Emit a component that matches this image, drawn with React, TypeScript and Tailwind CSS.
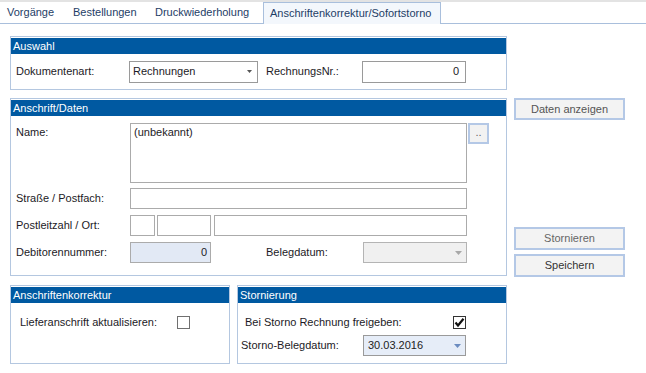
import React from "react";

function GroupBox({ title, className, children }: { title: string; className?: string; children: React.ReactNode }) {
  return (
    <div className={"border border-[#b4c7e0] flex flex-col " + (className ?? "")}>
      <div className="mt-px h-[16px] bg-[#0059a1] text-white pl-[2px] leading-[16px]">{title}</div>
      {children}
    </div>
  );
}

function Arrow({ color, w = 7, h = 4 }: { color: string; w?: number; h?: number }) {
  return (
    <svg width={w} height={h} viewBox={`0 0 ${w} ${h}`} className="shrink-0">
      <path d={`M0 0 L${w} 0 L${w / 2} ${h} Z`} fill={color} />
    </svg>
  );
}

function Check({ checked }: { checked?: boolean }) {
  return (
    <div
      className={
        "w-[13px] h-[13px] bg-white border flex items-center justify-center " +
        (checked ? "border-[#333333]" : "border-[#707070]")
      }
    >
      {checked && (
        <svg width="11" height="11" viewBox="0 0 11 11">
          <path d="M1.5 5.5 L4 8.5 L9.5 1.8" stroke="#111" strokeWidth="2.2" fill="none" />
        </svg>
      )}
    </div>
  );
}

export default function App() {
  return (
    <div className="w-[646px] h-[373px] bg-white overflow-hidden text-[11px] leading-[13px] text-[#1c1a26] font-['Liberation_Sans',Arial,sans-serif]">
      <div className="h-[2px] bg-[#e3e3e3]" />
      <div className="h-[22px] border-b border-[#a9bfdc] flex items-stretch text-[#1e3d66]">
        <div className="w-[66px] pl-[7px] flex items-center">Vorgänge</div>
        <div className="w-[82px] pl-[7px] flex items-center">Bestellungen</div>
        <div className="w-[115px] pl-[7px] flex items-center">Druckwiederholung</div>
        <div className="w-[178px] pl-[6px] flex items-center border-l border-t border-r border-[#a9bfdc] bg-[#f3f7fc] -mb-px">
          Anschriftenkorrektur/Sofortstorno
        </div>
      </div>

      <div className="pl-[10px] pt-[12px] flex flex-col">
        <GroupBox title="Auswahl" className="w-[497px]">
          <div className="h-[35px] flex items-center pl-[5px]">
            <div className="w-[113px]">Dokumentenart:</div>
            <div className="w-[129px] h-[22px] border border-[#9a9a9a] bg-white flex items-center pl-[3px] pr-[5px]">
              <span className="flex-1">Rechnungen</span>
              <Arrow color="#555" w={5} h={3} />
            </div>
            <div className="ml-[8px] w-[96px]">RechnungsNr.:</div>
            <div className="w-[104px] h-[22px] border border-[#9a9a9a] bg-white flex items-center justify-end pr-[6px]">0</div>
          </div>
        </GroupBox>

        <div className="flex mt-[8px]">
          <GroupBox title="Anschrift/Daten" className="w-[497px] h-[178px]">
            <div className="flex flex-col pl-[5px] pt-[7px]">
              <div className="flex">
                <div className="w-[114px] pt-[3px]">Name:</div>
                <div className="w-[337px] h-[60px] border border-[#ababab] bg-white pl-[3px] pt-[2px]">(unbekannt)</div>
                <div className="ml-px w-[21px] h-[21px] border-2 border-[#b4c8e6] bg-[#f2f2f2] flex items-center justify-center text-[#666] leading-none pb-[3px]">..</div>
              </div>
              <div className="flex items-center mt-[5px]">
                <div className="w-[114px]">Straße / Postfach:</div>
                <div className="w-[337px] h-[21px] border border-[#ababab] bg-white" />
              </div>
              <div className="flex items-center mt-[6px]">
                <div className="w-[114px]">Postleitzahl / Ort:</div>
                <div className="w-[25px] h-[21px] border border-[#ababab] bg-white" />
                <div className="ml-[2px] w-[54px] h-[21px] border border-[#ababab] bg-white" />
                <div className="ml-[3px] w-[253px] h-[21px] border border-[#ababab] bg-white" />
              </div>
              <div className="flex items-center mt-[6px]">
                <div className="w-[114px]">Debitorennummer:</div>
                <div className="w-[81px] h-[21px] border border-[#ababab] bg-[#e2e9f5] flex items-center justify-end pr-[3px]">0</div>
                <div className="ml-[55px] w-[97px]">Belegdatum:</div>
                <div className="w-[104px] h-[21px] border border-[#b4b4b4] bg-[#f0f0f0] flex items-center justify-end pr-[4px]">
                  <Arrow color="#a8a8a8" />
                </div>
              </div>
            </div>
          </GroupBox>

          <div className="ml-[7px] w-[111px] flex flex-col">
            <div className="h-[22px] border-2 border-[#b4c8e6] bg-[#f3f3f3] flex items-center justify-center text-[#555]">Daten anzeigen</div>
            <div className="mt-[107px] h-[23px] border-2 border-[#b4c8e6] bg-[#f3f3f3] flex items-center justify-center text-[#666]">Stornieren</div>
            <div className="mt-[4px] h-[23px] border-2 border-[#b4c8e6] bg-[#f3f3f3] flex items-center justify-center text-[#333]">Speichern</div>
          </div>
        </div>

        <div className="flex mt-[8px]">
          <GroupBox title="Anschriftenkorrektur" className="w-[220px] h-[79px]">
            <div className="flex items-center pl-[9px] pt-[13px]">
              <div className="w-[157px]">Lieferanschrift aktualisieren:</div>
              <Check />
            </div>
          </GroupBox>
          <GroupBox title="Stornierung" className="ml-[7px] w-[270px] h-[79px]">
            <div className="flex flex-col pt-[13px]">
              <div className="flex items-center pl-[7px]">
                <div className="w-[208px]">Bei Storno Rechnung freigeben:</div>
                <Check checked />
              </div>
              <div className="flex items-center pl-[3px] mt-[6px]">
                <div className="w-[122px]">Storno-Belegdatum:</div>
                <div className="w-[103px] h-[21px] border border-[#9a9a9a] bg-[#e6edf8] flex items-center pl-[4px] pr-[4px]">
                  <span className="flex-1 text-[#222]">30.03.2016</span>
                  <Arrow color="#6b8cc0" />
                </div>
              </div>
            </div>
          </GroupBox>
        </div>
      </div>
    </div>
  );
}
